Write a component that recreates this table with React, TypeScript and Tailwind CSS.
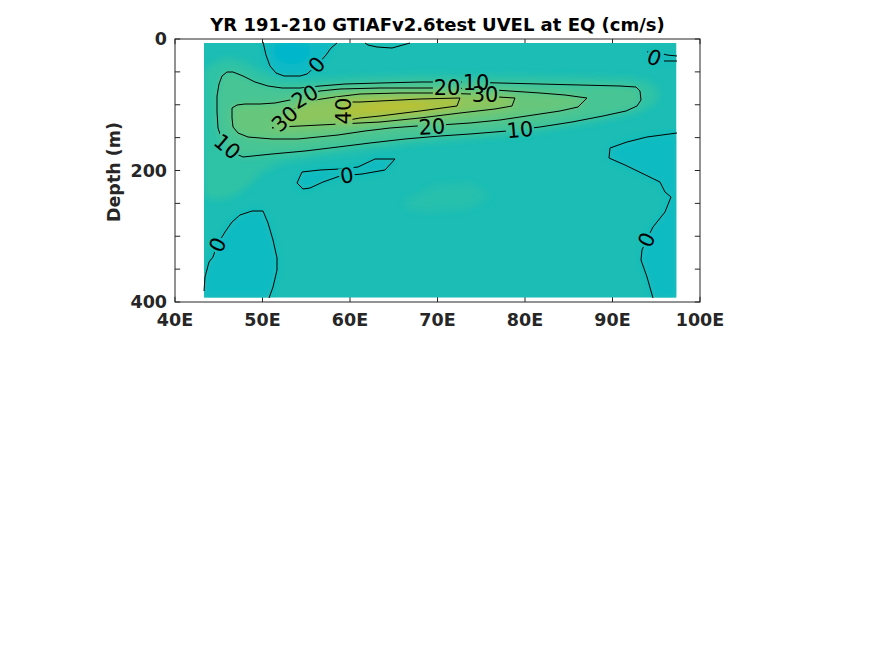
import React from "react";

type Label = { t: string; x: number; y: number; r: number };

const labels: Label[] = [
  { t: "0", x: 317, y: 65, r: -48 },
  { t: "0", x: 654, y: 58, r: 22 },
  { t: "20", x: 305, y: 97, r: -30 },
  { t: "30", x: 285, y: 119, r: -42 },
  { t: "40", x: 344, y: 111, r: -90 },
  { t: "20", x: 447, y: 88, r: 0 },
  { t: "10", x: 476, y: 83, r: 0 },
  { t: "30", x: 485, y: 95, r: 0 },
  { t: "20", x: 432, y: 127, r: -3 },
  { t: "10", x: 520, y: 130, r: -5 },
  { t: "10", x: 227, y: 147, r: 40 },
  { t: "0", x: 347, y: 176, r: -8 },
  { t: "0", x: 218, y: 245, r: -64 },
  { t: "0", x: 647, y: 240, r: -64 },
];

const C5 =
  "M204,70 L215,62 228,58 245,62 262,72 285,78 320,79 360,77 420,75 500,76 580,77 630,78 650,82 660,92 655,104 640,112 600,121 560,128 520,134 470,139 420,143 370,149 320,156 280,163 262,172 248,186 232,197 215,200 204,196 Z";
const C10 =
  "M222,76 L227,72 233,72 243,76 255,82 268,86 282,88 300,88 320,86 345,84 380,83 420,82 460,82 500,83 540,84 580,85 620,86 636,87 640,91 641,100 637,106 626,111 603,116 572,122 540,127 507,131 470,134 440,136 405,139 370,143 338,147 305,151 272,154 243,157 232,152 222,140 218,128 217,112 217,96 219,84 Z";
const C20 =
  "M237,105 L245,104 260,104 275,103 290,100 305,95 320,91 340,89 380,88 420,88 450,88 480,89 510,91 540,93 565,95 587,98 L578,107 560,111 540,114 500,120 470,123 440,125 417,126 390,128 365,131 338,135 318,137 298,139 272,139 248,137 238,133 233,127 232,118 232,108 Z";
const C30 =
  "M272,128 L280,121 290,112 300,105 315,100 335,97 360,94 400,93 440,93 470,94 498,97 515,98 L512,106 495,109 460,113 420,118 380,122 340,124 300,126 280,127 Z";
const C40 =
  "M343,102 L360,102 380,101 420,99 460,98 L457,106 420,111 380,116 360,118 343,121 Z";

const N1 = "M263,42 L266,55 270,66 276,73 284,76 300,76 307,74 317,65 326,55 331,48 337,42 Z";
const N2 =
  "M204,292 L205,277 209,262 213,257 217,245 225,232 232,222 240,215 252,211 263,211 268,223 273,240 277,258 277,270 273,287 269,298 L204,298 Z";
const N3 =
  "M677,133 L647,137 627,142 610,148 609,158 625,165 660,182 665,192 671,197 665,212 653,227 647,239 642,250 641,260 647,277 653,298 L677,298 Z";
const N4 =
  "M302,172 L320,170 340,169 358,167 375,159 395,159 385,170 362,174 340,176 323,182 310,188 303,189 297,183 Z";
const N5 = "M647,52 L652,51 660,53 667,55 677,56 L677,61 664,61 655,64 648,60 Z";
const P1 = "M406,199 L436,185 471,183 491,196 468,209 428,212 406,209 Z";

const L0 = [
  "M263,42 L266,55 270,66 276,73 284,76 300,76 307,74 317,65 326,55 331,48 337,43",
  "M365,43 L368,45 377,47 392,48 410,43",
  "M204,291 L205,277 209,262 213,257 217,245 225,232 232,222 240,215 252,211 263,211 268,223 273,240 277,258 277,270 273,287 269,298",
  "M677,133 L647,137 627,142 610,148 609,158 625,165 660,182 665,192 671,197 665,212 653,227 647,239 642,250 641,260 647,277 653,298",
  "M302,172 L320,170 340,169 358,167 375,159 395,159 385,170 362,174 340,176 323,182 310,188 303,189 297,183 Z",
  "M647,52 L652,51 660,53 667,55 677,56",
  "M664,61 L677,61",
];

const yTicks = [0, 50, 100, 150, 200, 250, 300, 350, 400].map((d) => 39 + d * 0.6575);
const xTicks = [40, 50, 60, 70, 80, 90, 100].map((l) => 175 + (l - 40) * 8.75);

export default function App() {
  return (
    <div className="w-[875px] h-[656px] bg-white">
      <svg
        width={875}
        height={656}
        viewBox="0 0 875 656"
        className="block font-['DejaVu_Sans',sans-serif]"
      >
        <defs>
          <clipPath id="dataClip">
            <rect x={204} y={43} width={472.5} height={254.7} />
          </clipPath>
          <filter id="soft" x="-10%" y="-10%" width="120%" height="120%">
            <feGaussianBlur stdDeviation="3.5" />
          </filter>
          <mask id="labelMask" maskUnits="userSpaceOnUse" x={0} y={0} width={875} height={656}>
            <rect x={0} y={0} width={875} height={656} fill="white" />
            {labels.map((l, i) => {
              const w = l.t.length * 12.6 + 3;
              return (
                <rect
                  key={i}
                  x={l.x - w / 2}
                  y={l.y - 8.5}
                  width={w}
                  height={17}
                  fill="black"
                  transform={`rotate(${l.r} ${l.x} ${l.y})`}
                />
              );
            })}
          </mask>
        </defs>

        {/* ticks (drawn below data) */}
        <g stroke="#262626" strokeWidth={1}>
          {yTicks.map((y, i) => (
            <g key={`y${i}`}>
              <line x1={175} y1={y} x2={180.2} y2={y} />
              <line x1={694.8} y1={y} x2={700} y2={y} />
            </g>
          ))}
          {xTicks.map((x, i) => (
            <g key={`x${i}`}>
              <line x1={x} y1={302} x2={x} y2={296.8} />
              <line x1={x} y1={39} x2={x} y2={44.2} />
            </g>
          ))}
        </g>

        {/* filled field */}
        <g clipPath="url(#dataClip)">
          <rect x={204} y={43} width={472.5} height={254.7} fill="#1bbdb4" />
          <g filter="url(#soft)">
            <path d={P1} fill="#25c0ad" />
            <path d={N2} fill="#0cbbc3" />
            <path d={N3} fill="#0cbbc3" />
            <path d={N4} fill="#0fbbc1" />
            <path d={N5} fill="#12bcbf" />
            <path d={N1} fill="#0bbac5" />
            <ellipse cx={292} cy={52} rx={18} ry={12} fill="#04b6cb" />
            <path d={C5} fill="#2fc2a6" />
            <path d={C10} fill="#47c594" />
            <path d={C20} fill="#66c77c" />
            <path d={C30} fill="#8cc65d" />
            <path d={C40} fill="#aec33d" />
            <ellipse cx={395} cy={106} rx={34} ry={5} fill="#bbc131" />
          </g>
        </g>

        {/* contour lines */}
        <g
          mask="url(#labelMask)"
          fill="none"
          stroke="#000"
          strokeWidth={1}
          strokeLinejoin="round"
        >
          {L0.map((d, i) => (
            <path key={i} d={d} />
          ))}
          <path d={C10} />
          <path d={C20} />
          <path d={C30} />
          <path d={C40} />
        </g>

        {/* contour labels */}
        <g fill="#000" fontSize={21}>
          {labels.map((l, i) => (
            <text
              key={i}
              x={l.x}
              y={l.y}
              textAnchor="middle"
              dominantBaseline="central"
              transform={`rotate(${l.r} ${l.x} ${l.y})`}
            >
              {l.t}
            </text>
          ))}
        </g>

        {/* axes box */}
        <rect
          x={175}
          y={39}
          width={525}
          height={263}
          fill="none"
          stroke="#262626"
          strokeWidth={1}
        />

        {/* tick labels */}
        <g fill="#262626" fontWeight="bold" fontSize={17.5}>
          <text x={167} y={45.4} textAnchor="end">0</text>
          <text x={167} y={176.9} textAnchor="end">200</text>
          <text x={167} y={308.4} textAnchor="end">400</text>
          {["40E", "50E", "60E", "70E", "80E", "90E", "100E"].map((t, i) => (
            <text key={t} x={xTicks[i]} y={326} textAnchor="middle">
              {t}
            </text>
          ))}
          <text
            x={120}
            y={172}
            textAnchor="middle"
            transform="rotate(-90 120 172)"
          >
            Depth (m)
          </text>
        </g>

        {/* title */}
        <text
          x={437.5}
          y={31}
          textAnchor="middle"
          fontWeight="bold"
          fontSize={18}
          fill="#000"
        >
          YR 191-210 GTIAFv2.6test UVEL at EQ (cm/s)
        </text>
      </svg>
    </div>
  );
}
